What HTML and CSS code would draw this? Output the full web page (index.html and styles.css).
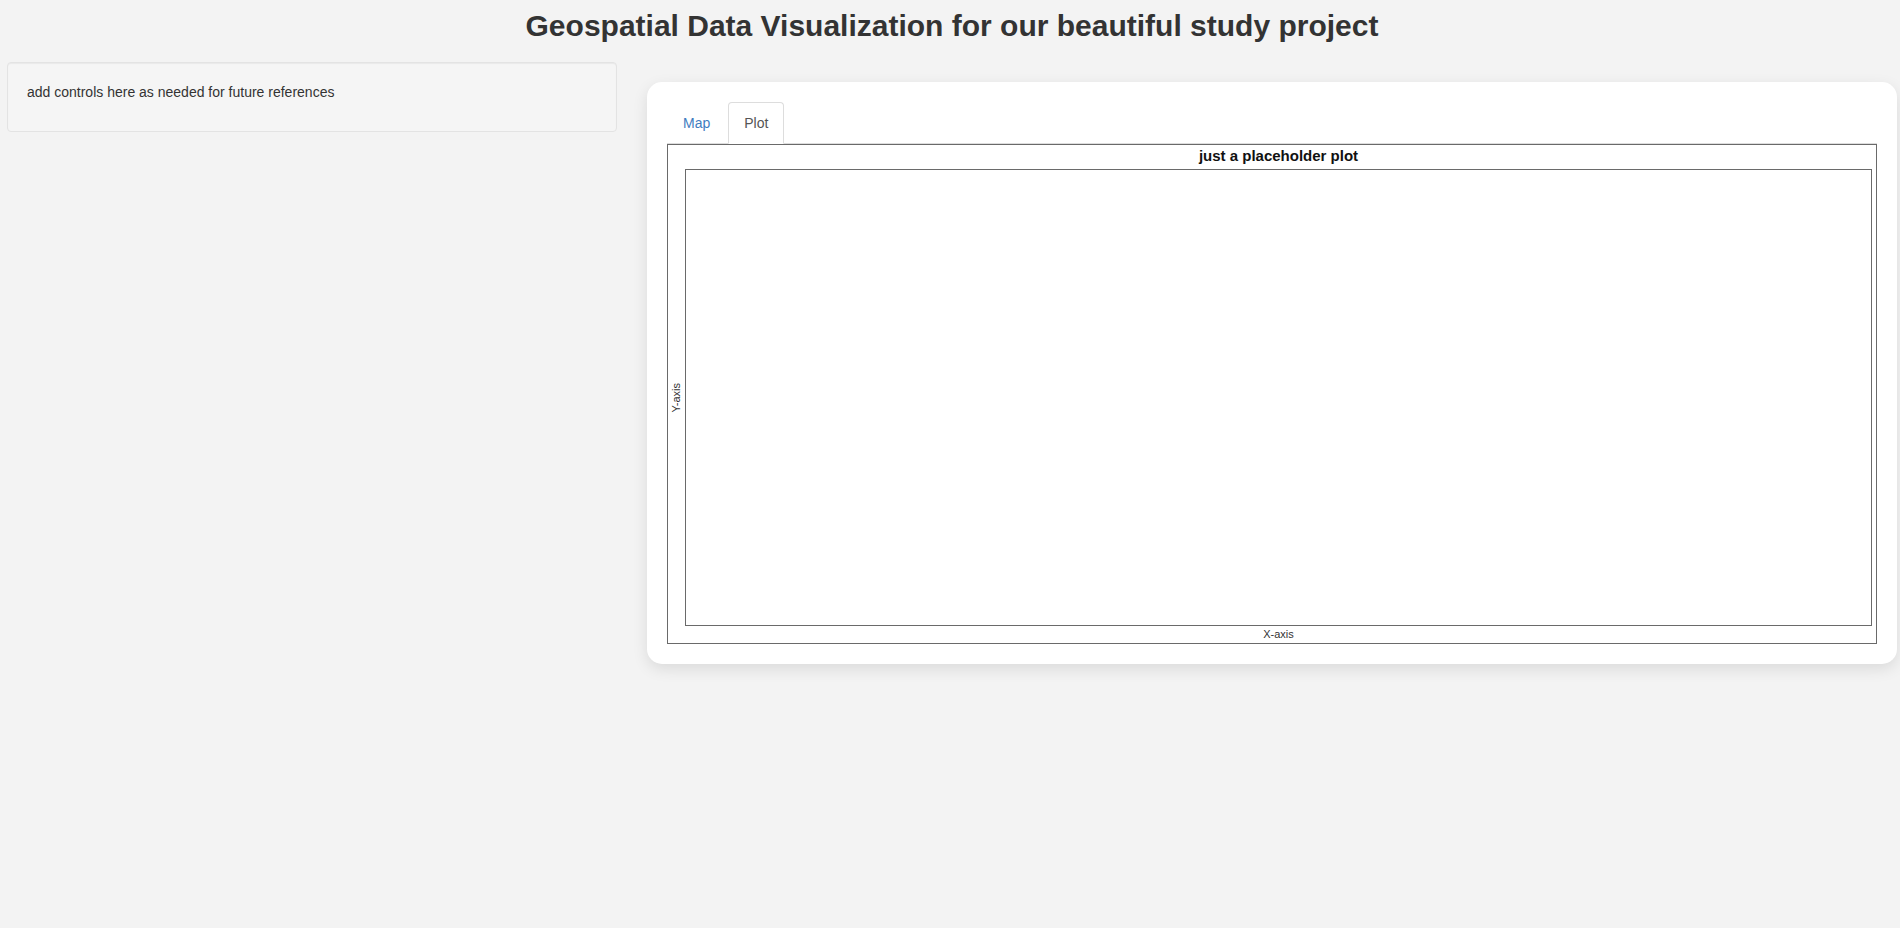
FILE: index.html
```html
<!DOCTYPE html>
<html lang="en">
<head>
<meta charset="utf-8">
<title>Geospatial Data Visualization</title>
<link rel="stylesheet" href="styles.css">
</head>
<body>
  <div class="page">
    <h2 class="page-title">Geospatial Data Visualization for our beautiful study project</h2>
    <div class="layout">
      <div class="sidebar">
        <div class="well">
          <p>add controls here as needed for future references</p>
        </div>
      </div>
      <div class="main">
        <div class="card">
          <ul class="nav-tabs">
            <li class="tab"><a href="#">Map</a></li>
            <li class="tab active"><a href="#">Plot</a></li>
          </ul>
          <div class="plot-figure">
            <div class="plot-title">just a placeholder plot</div>
            <div class="plot-ylab"><span>Y-axis</span></div>
            <div class="plot-area"></div>
            <div class="plot-spacer"></div>
            <div class="plot-xlab">X-axis</div>
          </div>
        </div>
      </div>
    </div>
  </div>
</body>
</html>
```

FILE: styles.css
```css
* {
  box-sizing: border-box;
}

html, body {
  margin: 0;
  padding: 0;
}

body {
  background: #f3f3f3;
  font-family: "Liberation Sans", Arial, Helvetica, sans-serif;
  font-size: 14px;
  line-height: 20px;
  color: #333333;
  width: 1900px;
  height: 928px;
}

.page {
  padding-top: 9px;
}

.page-title {
  margin: 0 0 20px 0;
  padding-left: 4px;
  font-size: 30px;
  line-height: 33px;
  font-weight: bold;
  text-align: center;
  color: #333333;
}

.layout {
  display: grid;
  grid-template-columns: 610px 1250px;
  column-gap: 30px;
  padding-left: 7px;
  align-items: start;
}

.well {
  background: #f5f5f5;
  border: 1px solid #e3e3e3;
  border-radius: 4px;
  box-shadow: inset 0 1px 1px rgba(0, 0, 0, 0.05);
  padding: 19px;
}

.well p {
  margin: 0 0 10px 0;
}

.main {
  padding-top: 20px;
}

.card {
  background: #ffffff;
  border-radius: 15px;
  box-shadow: 0 5px 15px rgba(0, 0, 0, 0.1);
  padding: 20px;
}

.nav-tabs {
  display: flex;
  list-style: none;
  margin: 0;
  padding: 0;
  border-bottom: 1px solid #dddddd;
}

.tab {
  margin-bottom: -1px;
  margin-right: 2px;
}

.tab a {
  display: block;
  padding: 10px 15px;
  line-height: 20px;
  border: 1px solid transparent;
  border-radius: 4px 4px 0 0;
  color: #3f7cbf;
  text-decoration: none;
}

.tab.active a {
  color: #555555;
  background: #ffffff;
  border-color: #dddddd #dddddd transparent #dddddd;
}

.plot-figure {
  width: 1210px;
  height: 500px;
  border: 1px solid #6a6a6a;
  display: grid;
  grid-template-columns: 17px 1187px 4px;
  grid-template-rows: 24px 457px 17px;
  background: #ffffff;
}

.plot-title {
  grid-column: 2;
  grid-row: 1;
  font-size: 15px;
  font-weight: bold;
  color: #111111;
  text-align: center;
  line-height: 22px;
}

.plot-ylab {
  grid-column: 1;
  grid-row: 2;
  display: flex;
  align-items: center;
  justify-content: center;
}

.plot-ylab span {
  writing-mode: vertical-rl;
  transform: rotate(180deg);
  font-size: 11px;
  line-height: 11px;
  color: #333333;
}

.plot-area {
  grid-column: 2;
  grid-row: 2;
  border: 1px solid #6a6a6a;
}

.plot-spacer {
  grid-column: 3;
  grid-row: 2;
}

.plot-xlab {
  grid-column: 2;
  grid-row: 3;
  font-size: 11px;
  line-height: 17px;
  text-align: center;
  color: #333333;
}
```
